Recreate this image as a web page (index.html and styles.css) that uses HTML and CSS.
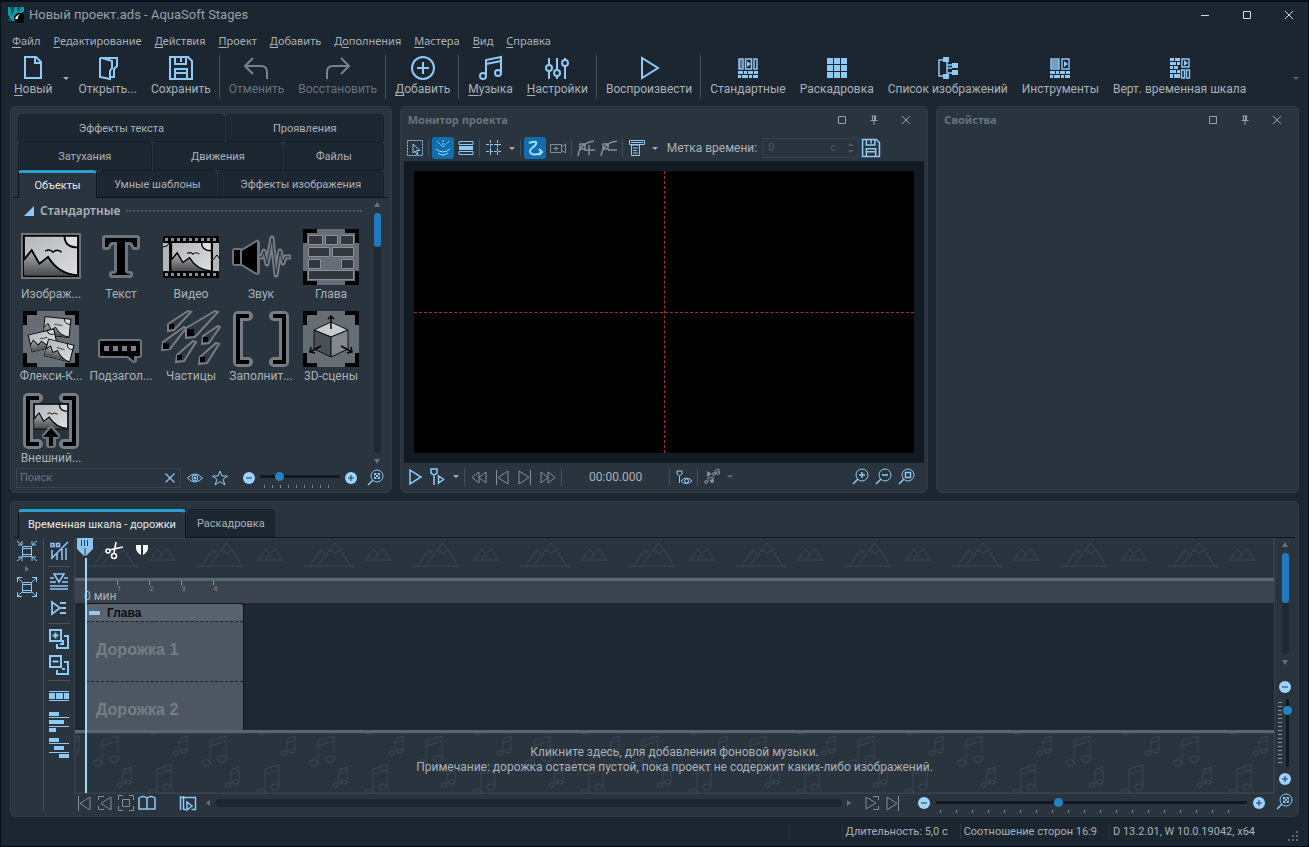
FILE: index.html
```
<!DOCTYPE html>
<html lang="ru">
<head>
  <meta charset="UTF-8">
  <meta name="viewport" content="width=device-width, initial-scale=1.0">
  <title>Новый проект.ads - AquaSoft Stages</title>
  <link rel="stylesheet" href="styles.css">
</head>
<body>
  <svg class="sprite" aria-hidden="true">
    <defs>
      <linearGradient id="sky" x1="0" y1="0" x2="1" y2="1"><stop offset="0" stop-color="#b4b6b9"/><stop offset="1" stop-color="#dcdee0"/></linearGradient>
      <linearGradient id="hill" x1="0" y1="0" x2="0" y2="1"><stop offset="0" stop-color="#b0b2b4"/><stop offset="1" stop-color="#4a4c4f"/></linearGradient>
    </defs>
    <!-- main toolbar, 26x26 -->
    <symbol id="i-new" viewBox="0 0 26 26"><path d="M5 2h11l5 5v16H5zM15 2v6h6"/></symbol>
    <symbol id="i-open" viewBox="0 0 26 26"><path d="M5 3h17v8l-3 3v8h-4M5 3v19l10 2v-8l2-3V6L7 3"/></symbol>
    <symbol id="i-save" viewBox="0 0 26 26"><path d="M2 2h18l4 4v18H2zM7 2v7h11V2M13 3v4M7 24V14h12v10M7 18h12"/></symbol>
    <symbol id="i-undo" viewBox="0 0 26 26"><path d="M10 3L2 11l8 8M2 11h16q6 0 6 6v7"/></symbol>
    <symbol id="i-redo" viewBox="0 0 26 26"><path d="M16 3l8 8-8 8M24 11H8q-6 0-6 6v7"/></symbol>
    <symbol id="i-add" viewBox="0 0 26 26"><circle cx="13" cy="13" r="11"/><path d="M13 7v12M7 13h12"/></symbol>
    <symbol id="i-music" viewBox="0 0 26 26"><path d="M8 20V5l15-3v16M8 9l15-3"/><circle cx="5" cy="21" r="3"/><circle cx="20" cy="18" r="3"/></symbol>
    <symbol id="i-sliders" viewBox="0 0 26 26"><path d="M5 3v7M5 16v8M13 3v12M13 21v3M21 3v2M21 11v13"/><circle cx="5" cy="13" r="3"/><circle cx="13" cy="18" r="3"/><circle cx="21" cy="8" r="3"/></symbol>
    <symbol id="i-play" viewBox="0 0 26 26"><path d="M6 3v20l16-10z"/></symbol>
    <symbol id="i-lay1" viewBox="0 0 26 26"><path d="M4 4h4v10H4zM10.500 4h6v10h-6zM19 4h3v10h-3z" stroke-width="1.500"/><path d="M4 6h3M4 8h3M4 10h3M4 12h3" stroke-width="1"/><path class="fl" d="M12 6l4 3-4 3zM3 16h5v3H3zM9 16h3v3H9zM13 16h5v3h-5zM19 16h4v3h-4zM3 20h3v3H3zM7 20h6v3H7zM14 20h3v3h-3zM18 20h5v3h-5z"/></symbol>
    <symbol id="i-grid9" viewBox="0 0 26 26"><path class="fl" d="M3 3h6v6H3zM10 3h6v6h-6zM17 3h6v6h-6zM3 10h6v6H3zM10 10h6v6h-6zM17 10h6v6h-6zM3 17h6v6H3zM10 17h6v6h-6zM17 17h6v6h-6z"/></symbol>
    <symbol id="i-tree" viewBox="0 0 26 26"><path d="M8 5H4v16h4M12 6v7h5M12 13v5h5M12 10h6" stroke-width="1.500"/><path class="fl" d="M8 2h6v5H8zM17 8h6v5h-6zM17 15h6v5h-6zM8 19h6v5H8z"/></symbol>
    <symbol id="i-lay2" viewBox="0 0 26 26"><path d="M15 4h7v10h-7zM4 4h8v10H4zM4 6h8M4 8h8M4 10h8M4 12h8" stroke-width="1.400"/><path class="fl" d="M17 6l4 3-4 3zM3 16h5v3H3zM9 16h3v3H9zM13 16h5v3h-5zM19 16h4v3h-4zM3 20h3v3H3zM7 20h6v3H7zM14 20h3v3h-3zM18 20h5v3h-5z"/></symbol>
    <symbol id="i-lay3" viewBox="0 0 26 26"><path d="M15 4h7v8h-7zM14.500 15h3v8h-3zM19.500 15h3v8h-3z" stroke-width="1.400"/><path class="fl" d="M17 5l4 3-4 3zM3 3h4v3H3zM8 3h5v3H8zM3 7h6v3H3zM10 7h3v3h-3zM3 11h3v3H3zM7 11h4v3H7zM3 15h6v3H3zM10 15h3v3h-3zM3 19h3v4H3zM7 19h6v4H7z"/></symbol>

    <!-- window and panel controls -->
    <symbol id="i-min" viewBox="0 0 16 16"><path d="M4 8.500h8"/></symbol>
    <symbol id="i-max" viewBox="0 0 16 16"><path d="M4.500 4.500h7v7h-7z"/></symbol>
    <symbol id="i-close" viewBox="0 0 16 16"><path d="M4 4l8 8M12 4l-8 8"/></symbol>
    <symbol id="i-pin" viewBox="0 0 16 16"><path d="M5.500 4h5M6.500 4v4.500M4.500 8.500h7M8 9v4"/><path class="fl" d="M8 4h2v5H8z"/></symbol>

    <!-- monitor toolbar, 20x20 -->
    <symbol id="i-select" viewBox="0 0 20 20"><path d="M2.500 2.500h15v15h-15z" stroke-dasharray="2 1"/><path d="M8 6v9l2-2 2 4 1-1-1.500-3.500H15z"/></symbol>
    <symbol id="i-snap" viewBox="0 0 20 20"><path d="M4 3l6 6 6-6M10 2v6" stroke-dasharray="2 1"/><path d="M3 11q7 6 14 0M5 15q5 4 10 0"/></symbol>
    <symbol id="i-rows" viewBox="0 0 20 20"><path d="M3 3.500h14v3H3z"/><path class="fl" d="M3 8h14v4H3z"/><path d="M3 13.500h14v3H3z"/></symbol>
    <symbol id="i-hash" viewBox="0 0 20 20"><path d="M6.500 2v16M13.500 2v16M2 6.500h16M2 13.500h16" stroke-dasharray="3 1"/></symbol>
    <symbol id="i-path" viewBox="0 0 20 20"><path d="M4 5q9-3 7 1c-2 4-6 4-6 7 0 4 7 5 12 1M14 11l3 3-3 3" stroke-width="2"/></symbol>
    <symbol id="i-cam" viewBox="0 0 20 20"><path d="M2.500 6.500h11v8h-11zM13.500 9l4-3v9l-4-3M8 8v5M5.500 10.500h5"/></symbol>
    <symbol id="i-cplus" viewBox="0 0 20 20"><path d="M2 18Q4 5 18 3M4 6h5v5H4zM13 7v10M8 12h11" stroke-width="1.500"/></symbol>
    <symbol id="i-cminus" viewBox="0 0 20 20"><path d="M2 18Q4 5 18 3M4 6h5v5H4zM9 12h9" stroke-width="1.500"/></symbol>
    <symbol id="i-text" viewBox="0 0 20 20"><path d="M2.500 2.500h15v4h-15zM4.500 7h8v10.500h-8zM6 10h5M6 12.500h4M6 15h5M4 4.500h12"/></symbol>

    <!-- playback -->
    <symbol id="p-play" viewBox="0 0 20 20"><path d="M5 3v14l11-7z" stroke-width="1.500"/></symbol>
    <symbol id="p-mark" viewBox="0 0 20 20"><path d="M3 2h6v4L6 8 3 6zM6 8v10M10.500 9v7l5-3.500z" stroke-width="1.500"/></symbol>
    <symbol id="p-rew" viewBox="0 0 20 20"><path d="M10 5v11l-7-5.500zM17 5v11l-7-5.500z"/></symbol>
    <symbol id="p-first" viewBox="0 0 20 20"><path d="M4.500 3v15M16 4v13l-10-6.500z"/></symbol>
    <symbol id="p-last" viewBox="0 0 20 20"><path d="M15.500 3v15M4 4v13l10-6.500z"/></symbol>
    <symbol id="p-ff" viewBox="0 0 20 20"><path d="M10 5v11l7-5.500zM3 5v11l7-5.500z"/></symbol>
    <symbol id="p-eye" viewBox="0 0 20 20"><path d="M3 4h5v3L5.500 9 3 7zM5.500 9v7M7 14q5-6 11 0-6 5-11 0z"/><circle cx="12.500" cy="14" r="2"/></symbol>
    <symbol id="p-note" viewBox="0 0 20 20"><path class="fl" d="M5 4l5 3-5 3z"/><circle cx="4" cy="15" r="1.500"/><circle class="fl" cx="10" cy="14" r="2"/><path d="M6 15v-4l5-1v4M13 7V3l4-1v4"/><circle cx="12" cy="7" r="1.500"/><circle cx="16" cy="6" r="1.500"/></symbol>
    <symbol id="z-in" viewBox="0 0 20 20"><circle cx="11" cy="8" r="6"/><path d="M7 12l-5 5M11 5v6M8 8h6" stroke-width="1.500"/></symbol>
    <symbol id="z-out" viewBox="0 0 20 20"><circle cx="11" cy="8" r="6"/><path d="M7 12l-5 5M8 8h6" stroke-width="1.500"/></symbol>
    <symbol id="z-fit" viewBox="0 0 20 20"><circle cx="11" cy="8" r="6"/><path d="M7 12l-5 5M8.500 5.500h5v5h-5z" stroke-width="1.500"/></symbol>
    <symbol id="z-all" viewBox="0 0 20 20"><circle cx="11" cy="8" r="6"/><path d="M7 12l-5 5" stroke-width="1.500"/><path d="M8.500 5.500l5 5M13.500 5.500l-5 5M8.500 7.500v-2h2M11.500 5.500h2v2M13.500 8.500v2h-2M10.500 10.500h-2v-2"/></symbol>
    <symbol id="i-eye" viewBox="0 0 20 20"><path d="M2.500 10q7.500-8 15 0-7.500 8-15 0z"/><circle cx="10" cy="10" r="3"/><circle class="fl" cx="10" cy="10" r="1.500"/></symbol>
    <symbol id="i-star" viewBox="0 0 20 20"><path d="M10 3l2 5h5.500l-4.500 3.500 2 5.500-5-3.500L5 17l2-5.500L2.500 8H8z"/></symbol>
    <symbol id="i-minus" viewBox="0 0 14 14"><circle cx="7" cy="7" r="6" fill="#9fd3fb" stroke="none"/><path d="M4 7h6" stroke="#1b3a55"/></symbol>
    <symbol id="i-plus" viewBox="0 0 14 14"><circle cx="7" cy="7" r="6" fill="#9fd3fb" stroke="none"/><path d="M4 7h6M7 4v6" stroke="#1b3a55"/></symbol>

    <!-- timeline tools, 22x22 -->
    <symbol id="t-in" viewBox="0 0 22 22"><path d="M6.500 6.500h9v10h-9zM6.500 8.500h9M6.500 14.500h9M1 1l5 4M21 1l-5 4M1 21l5-4M21 21l-5-4M2 5h4V1M20 5h-4V1M2 17h4v4M20 17h-4v4"/></symbol>
    <symbol id="t-out" viewBox="0 0 22 22"><path d="M6.500 6.500h9v10h-9zM6.500 8.500h9M6.500 14.500h9M1 1l5 5M21 1l-5 5M1 21l5-5M21 21l-5-5M1.500 6V1.500H6M20.500 6V1.500H16M1.500 16v4.500H6M20.500 16v4.500H16"/></symbol>
    <symbol id="t-mode" viewBox="0 0 22 22"><path d="M3 3.500h3v3H3zM8.500 3.500h3v3h-3zM20 2L3 19M4 10v8M9 14v6M14 9v11M18 8v12" stroke-width="1.500"/></symbol>
    <symbol id="t-down" viewBox="0 0 22 22"><path d="M6 3h10l-5 8zM2 7h4M16 7h4M2 11h6M14 11h6M2 15h18M2 18h18" stroke-width="1.500"/></symbol>
    <symbol id="t-right" viewBox="0 0 22 22"><path d="M4 5v12l8-6zM12 6h6M13 11h5M12 16h6" stroke-width="1.800"/></symbol>
    <symbol id="t-add" viewBox="0 0 22 22"><path d="M2 2h11v11H2zM7.500 4.500v6M4.500 7.500h6M16 8h4v12H9v-4M15 12v4h-3" stroke-width="2"/></symbol>
    <symbol id="t-del" viewBox="0 0 22 22"><path d="M2 2h11v11H2zM4.500 7.500h6M16 8h4v12H9v-4M14 15h3" stroke-width="2"/></symbol>
    <symbol id="t-film" viewBox="0 0 22 22"><path d="M1 6.500h20M1 15.500h20"/><path class="fl" d="M1 8h6v6H1zM8 8h7v6H8zM16 8h5v6h-5z"/></symbol>
    <symbol id="t-al1" viewBox="0 0 22 22"><path d="M1 6.500h20M1 15.500h20"/><path class="fl" d="M1 1h10v4H1zM1 9h15v4H1zM1 17h7v4H1z"/></symbol>
    <symbol id="t-al2" viewBox="0 0 22 22"><path d="M1 6.500h20M1 15.500h20"/><path class="fl" d="M1 1h10v4H1zM6 9h10v4H6zM11 17h10v4H11z"/></symbol>
    <symbol id="n-left" viewBox="0 0 20 20"><path d="M9 3.500H3.500V7M3.500 13v3.500H9M16 4v13l-10-6.500z"/></symbol>
    <symbol id="n-right" viewBox="0 0 20 20"><path d="M11 3.500h5.500V7M16.500 13v3.500H11M4 4v12l10-6z"/></symbol>
    <symbol id="n-frame" viewBox="0 0 20 20"><path d="M6.500 6.500h7v7h-7zM2.500 7V2.500H7M13 2.500h4.500V7M17.500 13v4.500H13M7 17.500H2.500V13"/></symbol>
    <symbol id="n-book" viewBox="0 0 20 20"><path d="M10 5q-4-3-8 0v11h16V5q-4-3-8 0v11" stroke-width="1.500"/></symbol>
    <symbol id="n-box" viewBox="0 0 20 20"><path d="M2.500 3v14M5.500 3v14M2.500 4.500h15v12h-4M5.500 16.500H8M9 9v8l5-4z" stroke-width="1.500"/></symbol>

    <!-- landscape picture shared by several object icons -->
    <symbol id="pic" viewBox="0 0 60 46" preserveAspectRatio="none"><path fill="url(#sky)" stroke="#000" stroke-width="2" d="M2 2h56v42H2z"/><path fill="url(#hill)" stroke="none" d="M2 27l8-10 8 14 9-7q11 18 29 19H2z"/><path fill="none" stroke="#000" stroke-width="2" d="M2 27l8-10 8 14 9-7q11 18 30 19"/><path fill="#dcdee0" stroke="#000" stroke-width="2" d="M44 2q0 12 14 12V2z"/><path fill="none" stroke="#000" stroke-width="1.500" d="M24 18q5-3 8 1 4-4 9 0"/></symbol>
  </svg>

  <header class="titlebar">
    <svg class="app-logo" viewBox="0 0 16 16"><path fill="#04090d" d="M0 0h16v16H0z"/><path fill="#1599a5" d="M0 0h16v5l-5 2-5 8-3-2-3-5z"/><path fill="#0b5863" d="M2 0l2 9 3-9zM9 0l1 7 3-7zM1 8l3 8-4-2z"/><circle cx="11" cy="11" r="5" fill="#020406"/><path fill="#fff" d="M7 12q1-4 6-5-4 2-3 5z"/></svg>
    <span class="title">Новый проект.ads - AquaSoft Stages</span>
    <button class="win" aria-label="Свернуть"><svg class="ic"><use href="#i-min"/></svg></button>
    <button class="win" aria-label="Развернуть"><svg class="ic"><use href="#i-max"/></svg></button>
    <button class="win" aria-label="Закрыть"><svg class="ic"><use href="#i-close"/></svg></button>
  </header>

  <nav class="menu">
    <button><u>Ф</u>айл</button>
    <button><u>Р</u>едактирование</button>
    <button><u>Д</u>ействия</button>
    <button><u>П</u>роект</button>
    <button><u>Д</u>обавить</button>
    <button>Д<u>о</u>полнения</button>
    <button><u>М</u>астера</button>
    <button><u>В</u>ид</button>
    <button><u>С</u>правка</button>
  </nav>

  <div class="toolbar">
    <button><svg class="ic"><use href="#i-new"/></svg><span><u>Н</u>овый</span></button>
    <button class="arrow" aria-label="Ещё"></button>
    <button><svg class="ic"><use href="#i-open"/></svg><span>Открыть...</span></button>
    <button><svg class="ic"><use href="#i-save"/></svg><span>Сохранить</span></button>
    <i class="sep"></i>
    <button disabled><svg class="ic"><use href="#i-undo"/></svg><span>Отменить</span></button>
    <button disabled><svg class="ic"><use href="#i-redo"/></svg><span>Восстановить</span></button>
    <i class="sep"></i>
    <button><svg class="ic"><use href="#i-add"/></svg><span><u>Д</u>обавить</span></button>
    <i class="sep"></i>
    <button><svg class="ic"><use href="#i-music"/></svg><span><u>М</u>узыка</span></button>
    <button><svg class="ic"><use href="#i-sliders"/></svg><span><u>Н</u>астройки</span></button>
    <i class="sep"></i>
    <button><svg class="ic"><use href="#i-play"/></svg><span>Воспроизвести</span></button>
    <i class="sep"></i>
    <button><svg class="ic"><use href="#i-lay1"/></svg><span>Стандартные</span></button>
    <button><svg class="ic"><use href="#i-grid9"/></svg><span>Раскадровка</span></button>
    <button><svg class="ic"><use href="#i-tree"/></svg><span>Список изображений</span></button>
    <button><svg class="ic"><use href="#i-lay2"/></svg><span>Инструменты</span></button>
    <button><svg class="ic"><use href="#i-lay3"/></svg><span>Верт. временная шкала</span></button>
    <button class="arrow last dim" aria-label="Параметры панели"></button>
  </div>

  <main class="workspace">
    <section class="panel toolbox">
      <div class="tabs">
        <div class="tab-row r1"><button>Эффекты текста</button><button>Проявления</button></div>
        <div class="tab-row r2"><button>Затухания</button><button>Движения</button><button>Файлы</button></div>
        <div class="tab-row r3"><button class="active">Объекты</button><button>Умные шаблоны</button><button>Эффекты изображения</button></div>
      </div>
      <div class="list">
        <div class="list-main">
          <h2 class="group">Стандартные</h2>
          <div class="objects">
            <button class="object"><svg viewBox="0 0 60 60"><path fill="#6e747c" d="M0 6h60v46H0z"/><use href="#pic" x="1" y="7" width="58" height="44"/></svg><span>Изображ...</span></button>
            <button class="object"><svg viewBox="0 0 60 60"><path class="halo" d="M14 11h32v9h-3q-1-5-5-5h-4v29q0 3 5 3v1H21v-1q5 0 5-3V15h-4q-4 0-5 5h-3z"/><path d="M14 11h32v9h-3q-1-5-5-5h-4v29q0 3 5 3v1H21v-1q5 0 5-3V15h-4q-4 0-5 5h-3z"/></svg><span>Текст</span></button>
            <button class="object"><svg viewBox="0 0 60 60"><path fill="#c5c7ca" d="M2 11h56v38H2z"/><use href="#pic" x="9" y="14" width="43" height="32"/><path fill="#b4b6b9" d="M2 15h7v30H2zM52 15h6v30h-6z"/><path d="M2 9h56v7H2zM2 44h56v7H2zM8 14h2v32H8zM50 14h2v32h-2z"/><path stroke="#8b9199" stroke-width="3" stroke-dasharray="3 3" d="M4 12.500h54M4 47.500h54"/><path fill="none" stroke="#000" d="M2 20q5 0 6-4M52 33l4-5 3 4"/></svg><span>Видео</span></button>
            <button class="object"><svg viewBox="0 0 60 60"><path class="halo" d="M4 24h5v12H4zM11 25l15-9v29l-15-9z"/><path class="wave-halo" d="M28 30h3l2-6 3 13 5-26 4 37 4-24 3 12 2-6h5"/><path d="M3 23h6v14H3zM11 24l15-9v31l-15-9z"/><path class="wave" d="M28 30h3l2-6 3 13 5-26 4 37 4-24 3 12 2-6h5"/></svg><span>Звук</span></button>
            <button class="object"><svg viewBox="0 0 60 60"><path class="plate" d="M2 2h56v56H2z"/><path class="corner" d="M4 16V4h12M44 4h12v12M56 44v12H44M16 56H4V44"/><path class="brick" d="M7.500 8.500h14v9h-14zM24.500 8.500h12v9h-12zM39.500 8.500h13v9h-13zM7.500 20.500h21v9h-21zM31.500 20.500h21v9h-21zM7.500 32.500h12v9h-12zM40.500 32.500h12v9h-12zM7.500 43.500h45v9h-45z"/></svg><span>Глава</span></button>
            <button class="object"><svg viewBox="0 0 60 60"><path class="plate" d="M2 2h56v56H2z"/><path class="corner" d="M4 16V4h12M44 4h12v12M56 44v12H44M16 56H4V44"/><g transform="rotate(6 36 18)"><use href="#pic" x="22" y="8" width="28" height="20"/></g><g transform="rotate(-13 22 32)"><use href="#pic" x="8" y="22" width="28" height="19"/></g><g transform="rotate(14 38 42)"><use href="#pic" x="24" y="32" width="28" height="19"/></g></svg><span>Флекси-К...</span></button>
            <button class="object"><svg viewBox="0 0 60 60"><path class="halo" d="M10 33h38v13h-5v5l-6-5H10z"/><path d="M9 32h40v15h-6v5l-6-5H9z"/><path fill="#7b8088" d="M13 37h5v5h-5zM22 37h5v5h-5zM31 37h5v5h-5zM40 37h5v5h-5z"/></svg><span>Подзагол...</span></button>
            <button class="object"><svg viewBox="0 0 60 60"><path class="comet" d="M7 15L27 2l3 1-17 18-6 1zM25 19L54 2l3 1-23 25-9 1zM42 27l15-10 2 1-11 16-7 1zM2 33l21-15 2 1-16 21-8 1zM16 46l16-14 3 1-12 19-8 1zM39 48l16-14 3 1-12 19-8 1z"/><path d="M8 15h5v5H8zM26 20h7v7h-7zM42 28h5v5h-5zM2 34h6v6H2zM16 46h5v5h-5zM39 48h5v5h-5z"/></svg><span>Частицы</span></button>
            <button class="object"><svg viewBox="0 0 60 60"><path class="br-halo" d="M17 7H7v46h10M43 7h10v46H43"/><path class="br" d="M18 7H7v46h11M42 7h11v46H42"/></svg><span>Заполнит...</span></button>
            <button class="object"><svg viewBox="0 0 60 60"><path class="plate" d="M2 2h56v56H2z"/><path class="corner" d="M4 16V4h12M44 4h12v12M56 44v12H44M16 56H4V44"/><path fill="#c9cccf" stroke="#111" d="M13 21l17-8 17 8-17 7z"/><path fill="#4b5057" stroke="#111" d="M13 21l17 7v20l-17-8z"/><path fill="#83888f" stroke="#111" d="M47 21l-17 7v20l17-8z"/><path fill="none" stroke="#000" stroke-width="1.500" d="M30 20V7M27 10l3-3 3 3M20 37L9 43M10 38l-1 5 5 1M40 37l11 6M50 38l1 5-5 1"/></svg><span>3D-сцены</span></button>
            <button class="object"><svg viewBox="0 0 60 60"><path class="br-halo" d="M17 7H7v46h10M43 7h10v46H43"/><path class="br" d="M18 7H7v46h11M42 7h11v46H42"/><use href="#pic" x="12" y="12" width="36" height="27"/><path class="halo" d="M28 54V45h-4l6-7 6 7h-4v9z"/><path d="M28 55V46h-6l8-9 8 9h-6v9z"/></svg><span>Внешний...</span></button>
          </div>
        </div>
        <div class="scroll"><i class="tri up"></i><div class="scroll-track"><i class="thumb list-thumb"></i></div><i class="tri down"></i></div>
      </div>
      <div class="finder">
        <div class="search">
          <input type="text" placeholder="Поиск" aria-label="Поиск">
          <button class="tool" aria-label="Очистить"><svg class="ic"><use href="#i-close"/></svg></button>
        </div>
        <button class="tool" aria-label="Показать"><svg class="ic"><use href="#i-eye"/></svg></button>
        <button class="tool" aria-label="Избранное"><svg class="ic"><use href="#i-star"/></svg></button>
        <button class="tool round less" aria-label="Уменьшить"><svg class="ic"><use href="#i-minus"/></svg></button>
        <div class="slide"><input type="range" min="0" max="100" value="22" aria-label="Размер значков"><i class="ticks ticks-sm"></i></div>
        <button class="tool round more" aria-label="Увеличить"><svg class="ic"><use href="#i-plus"/></svg></button>
        <button class="tool" aria-label="Сбросить масштаб"><svg class="ic"><use href="#z-all"/></svg></button>
      </div>
    </section>

    <section class="panel monitor">
      <div class="panel-head">
        <h2>Монитор проекта</h2>
        <button aria-label="Развернуть"><svg class="ic"><use href="#i-max"/></svg></button>
        <button aria-label="Закрепить"><svg class="ic"><use href="#i-pin"/></svg></button>
        <button aria-label="Закрыть"><svg class="ic"><use href="#i-close"/></svg></button>
      </div>
      <div class="bar">
        <button class="tool" aria-label="Выделение"><svg class="ic"><use href="#i-select"/></svg></button>
        <i class="sep"></i>
        <button class="tool on" aria-label="Привязка"><svg class="ic"><use href="#i-snap"/></svg></button>
        <button class="tool" aria-label="Слои"><svg class="ic"><use href="#i-rows"/></svg></button>
        <i class="sep"></i>
        <button class="tool" aria-label="Сетка"><svg class="ic"><use href="#i-hash"/></svg></button>
        <button class="arrow" aria-label="Параметры сетки"></button>
        <i class="sep"></i>
        <button class="tool on" aria-label="Путь"><svg class="ic"><use href="#i-path"/></svg></button>
        <button class="tool gray" aria-label="Камера"><svg class="ic"><use href="#i-cam"/></svg></button>
        <i class="sep"></i>
        <button class="tool gray" aria-label="Добавить точку"><svg class="ic"><use href="#i-cplus"/></svg></button>
        <button class="tool gray" aria-label="Удалить точку"><svg class="ic"><use href="#i-cminus"/></svg></button>
        <i class="sep"></i>
        <button class="tool" aria-label="Текст"><svg class="ic"><use href="#i-text"/></svg></button>
        <button class="arrow" aria-label="Параметры текста"></button>
        <label class="stamp" for="stamp">Метка времени:</label>
        <div class="spin"><input id="stamp" type="text" value="0" disabled><span>с</span><div class="spin-arrows"><i class="tri up"></i><i class="tri down"></i></div></div>
        <button class="tool save" aria-label="Сохранить"><svg class="ic"><use href="#i-save"/></svg></button>
      </div>
      <div class="stage"><div class="screen"></div></div>
      <div class="bar play">
        <button class="tool" aria-label="Воспроизвести"><svg class="ic"><use href="#p-play"/></svg></button>
        <button class="tool" aria-label="От метки"><svg class="ic"><use href="#p-mark"/></svg></button>
        <button class="arrow" aria-label="Параметры воспроизведения"></button>
        <i class="sep"></i>
        <button class="tool gray" aria-label="Назад"><svg class="ic"><use href="#p-rew"/></svg></button>
        <button class="tool gray" aria-label="В начало"><svg class="ic"><use href="#p-first"/></svg></button>
        <button class="tool gray" aria-label="В конец"><svg class="ic"><use href="#p-last"/></svg></button>
        <button class="tool gray" aria-label="Вперёд"><svg class="ic"><use href="#p-ff"/></svg></button>
        <i class="sep"></i>
        <span class="timecode">00:00.000</span>
        <i class="sep"></i>
        <button class="tool" aria-label="Следить"><svg class="ic"><use href="#p-eye"/></svg></button>
        <i class="sep"></i>
        <button class="tool gray" aria-label="Звук"><svg class="ic"><use href="#p-note"/></svg></button>
        <button class="arrow dim" aria-label="Параметры звука"></button>
        <i class="grow"></i>
        <button class="tool" aria-label="Приблизить"><svg class="ic"><use href="#z-in"/></svg></button>
        <button class="tool" aria-label="Отдалить"><svg class="ic"><use href="#z-out"/></svg></button>
        <button class="tool" aria-label="Вписать"><svg class="ic"><use href="#z-fit"/></svg></button>
      </div>
    </section>

    <section class="panel props">
      <div class="panel-head">
        <h2>Свойства</h2>
        <button aria-label="Развернуть"><svg class="ic"><use href="#i-max"/></svg></button>
        <button aria-label="Закрепить"><svg class="ic"><use href="#i-pin"/></svg></button>
        <button aria-label="Закрыть"><svg class="ic"><use href="#i-close"/></svg></button>
      </div>
    </section>
  </main>

  <section class="panel timeline">
    <div class="tl-tabs">
      <button class="active">Временная шкала - дорожки</button>
      <button>Раскадровка</button>
    </div>
    <div class="tl-body">
      <div class="tl-tools zoomers">
        <button aria-label="Сжать"><svg class="ic"><use href="#t-in"/></svg></button>
        <i class="tri right"></i>
        <button aria-label="Растянуть"><svg class="ic"><use href="#t-out"/></svg></button>
      </div>
      <div class="tl-tools">
        <button aria-label="Режим"><svg class="ic"><use href="#t-mode"/></svg></button>
        <i class="hsep"></i>
        <button aria-label="Сдвиг вниз"><svg class="ic"><use href="#t-down"/></svg></button>
        <button aria-label="Сдвиг вправо"><svg class="ic"><use href="#t-right"/></svg></button>
        <i class="hsep"></i>
        <button aria-label="Добавить дорожку"><svg class="ic"><use href="#t-add"/></svg></button>
        <button aria-label="Удалить дорожку"><svg class="ic"><use href="#t-del"/></svg></button>
        <i class="hsep"></i>
        <button aria-label="Плёнка"><svg class="ic"><use href="#t-film"/></svg></button>
        <button aria-label="Выровнять"><svg class="ic"><use href="#t-al1"/></svg></button>
        <button aria-label="Ступенями"><svg class="ic"><use href="#t-al2"/></svg></button>
      </div>
      <div class="tl-center">
        <div class="tracks">
          <div class="band hills">
            <svg class="deco"><defs><pattern id="hills" x="13" y="1" width="108" height="39" patternUnits="userSpaceOnUse"><path d="M0 27h49M6 26l11-15 4 5M14 26L31 4l15 22M24 13l3-2 4 3 5-3M59 21h28M63 20l7-10 5 8M69 20l10-10 6 8"/></pattern></defs><rect width="100%" height="100%" fill="url(#hills)"/></svg>
          </div>
          <div class="ruler"><span class="zero">0 мин</span><div class="marks"><span>1</span><span>2</span><span>3</span><span>4</span></div></div>
          <div class="lanes">
            <article class="clip">
              <h3><i class="collapse"></i>Глава</h3>
              <div class="lane">Дорожка 1</div>
              <div class="lane">Дорожка 2</div>
            </article>
          </div>
          <div class="band music">
            <svg class="deco"><defs><pattern id="notes" x="18" y="2" width="108" height="60" patternUnits="userSpaceOnUse"><path d="M9 28V6l16-5v22M9 11l16-5M86 18V4l8-3v14M86 8l8-3M30 49V35l8-3v14M30 39l8-3M64 58V34l14-4v22M64 39l14-4"/><ellipse cx="5" cy="28" rx="5" ry="3"/><ellipse cx="21" cy="24" rx="5" ry="3"/><ellipse cx="83" cy="18" rx="3" ry="2"/><ellipse cx="91" cy="16" rx="3" ry="2"/><ellipse cx="27" cy="50" rx="3" ry="2"/><ellipse cx="35" cy="47" rx="3" ry="2"/><ellipse cx="60" cy="57" rx="5" ry="2"/><ellipse cx="74" cy="52" rx="4" ry="3"/></pattern></defs><rect width="100%" height="100%" fill="url(#notes)"/></svg>
            <p>Кликните здесь, для добавления фоновой музыки.<br>Примечание: дорожка остается пустой, пока проект не содержит каких-либо изображений.</p>
          </div>
          <div class="playhead">
            <svg class="head" viewBox="0 0 16 20"><path fill="#8cc4f0" d="M0 0h16v11l-7 7H7l-7-7z"/><path stroke="#23415c" stroke-width="1" fill="none" d="M4.500 2v6M7.500 2v6M10.500 2v6M8 10v8"/></svg>
            <svg class="cut" viewBox="0 0 20 20"><path fill="none" stroke="#fff" stroke-width="1.500" d="M11 2L9 13M4 10l14-3"/><circle cx="3" cy="11" r="2" fill="none" stroke="#fff" stroke-width="1.500"/><circle cx="9" cy="16" r="2.500" fill="none" stroke="#fff" stroke-width="1.500"/></svg>
            <svg class="split" viewBox="0 0 14 12"><path fill="#fff" d="M1 1h5v10Q1 8 1 4zM8 1h5v3q0 4-5 7z"/></svg>
          </div>
        </div>
        <div class="tl-nav">
          <button class="tool gray" aria-label="К началу"><svg class="ic"><use href="#p-first"/></svg></button>
          <button class="tool gray" aria-label="К предыдущему"><svg class="ic"><use href="#n-left"/></svg></button>
          <button class="tool gray" aria-label="К объекту"><svg class="ic"><use href="#n-frame"/></svg></button>
          <button class="tool" aria-label="Книга"><svg class="ic"><use href="#n-book"/></svg></button>
          <button class="tool follow" aria-label="Следовать"><svg class="ic"><use href="#n-box"/></svg></button>
          <i class="tri left"></i><div class="hscroll"></div><i class="tri right"></i>
          <button class="tool gray" aria-label="К следующему"><svg class="ic"><use href="#n-right"/></svg></button>
          <button class="tool gray" aria-label="К концу"><svg class="ic"><use href="#p-last"/></svg></button>
          <button class="tool round out" aria-label="Отдалить"><svg class="ic"><use href="#i-minus"/></svg></button>
          <div class="slide wide"><input type="range" min="0" max="100" value="39" aria-label="Масштаб времени"><i class="ticks"></i></div>
          <button class="tool round" aria-label="Приблизить"><svg class="ic"><use href="#i-plus"/></svg></button>
        </div>
      </div>
      <div class="tl-side">
        <div class="scroll"><i class="tri up"></i><div class="scroll-track"><i class="thumb tl-thumb"></i></div><i class="tri down"></i></div>
        <button class="tool round" aria-label="Ниже"><svg class="ic"><use href="#i-minus"/></svg></button>
        <div class="vslide"><i class="vticks"></i><input type="range" min="0" max="100" value="12" aria-label="Высота дорожек"></div>
        <button class="tool round" aria-label="Выше"><svg class="ic"><use href="#i-plus"/></svg></button>
        <button class="tool" aria-label="Вписать всё"><svg class="ic"><use href="#z-all"/></svg></button>
      </div>
    </div>
  </section>

  <footer class="status">
    <span class="blank"></span>
    <span>Длительность: 5,0 с</span>
    <span>Соотношение сторон 16:9</span>
    <span>D 13.2.01, W 10.0.19042, x64</span>
    <svg class="grip" viewBox="0 0 12 12"><path fill="#5a6671" d="M9 1h2v2H9zM5 5h2v2H5zM9 5h2v2H9zM1 9h2v2H1zM5 9h2v2H5zM9 9h2v2H9z"/></svg>
  </footer>
</body>
</html>
```
FILE: styles.css
```
* {
  box-sizing: border-box;
}

body {
  margin: 0;
  height: 100vh;
  display: flex;
  flex-direction: column;
  overflow: hidden;
  background: #1c2631;
  border: 1px solid #050f1c;
  border-top-width: 2px;
  color: #a9b1b8;
  font-family: Roboto, "Noto Sans", sans-serif;
  font-size: 12px;
  line-height: 16px;
}

button,
input {
  font: inherit;
  color: inherit;
  background: none;
  border: 0;
  padding: 0;
  margin: 0;
}

h2,
h3,
p {
  margin: 0;
}

.sprite {
  position: absolute;
  width: 0;
  height: 0;
}

.ic {
  display: block;
  width: 20px;
  height: 20px;
  fill: none;
  stroke: currentColor;
}

.fl {
  fill: currentColor;
  stroke: none;
}

.grow {
  flex: 1;
}

/* title and menu */
.titlebar {
  display: flex;
  align-items: center;
  height: 28px;
  padding: 0 5px 2px 7px;
}

.app-logo {
  width: 16px;
  height: 16px;
  margin-right: 5px;
}

.title {
  flex: 1;
  color: #98a1aa;
  font-size: 13px;
}

.win {
  width: 28px;
  margin-left: 14px;
  padding: 0 6px;
  color: #d5dade;
}

.win .ic,
.panel-head .ic {
  width: 16px;
  height: 16px;
}

.menu {
  display: flex;
  gap: 1px;
  height: 22px;
  padding-left: 5px;
  font-family: "Noto Sans", sans-serif;
  font-size: 11px;
}

.menu button {
  padding: 0 6px;
}

.tabs,
.tl-tabs,
.status {
  font-size: 11px;
}

u {
  text-underline-offset: 2px;
}

.toolbar {
  display: flex;
  height: 54px;
  padding: 3px 6px 5px 6px;
}

.toolbar button {
  display: flex;
  flex-direction: column;
  align-items: center;
  padding: 0 7px;
  white-space: nowrap;
}

.toolbar .ic {
  width: 26px;
  height: 26px;
  stroke-width: 2;
  color: #8fc9f5;
}

.toolbar button:disabled {
  color: #66717c;
}

.toolbar button:disabled .ic {
  color: #77828c;
}

.sep {
  flex: none;
  width: 1px;
  margin: 0 2px 0 1px;
  background: #434e59;
}

.toolbar .sep {
  height: 44px;
}

.arrow {
  width: 12px;
  flex: none;
}

.arrow::before {
  content: "";
  display: block;
  width: 0;
  margin: 0 auto;
  border: 3px solid transparent;
  border-bottom: 0;
  border-top-color: #a3adb6;
}

.arrow.dim::before {
  border-top-color: #5b6671;
}

.toolbar .arrow {
  justify-content: center;
  padding: 0 3px;
}

.toolbar .arrow.last {
  margin-left: auto;
}

/* panels */
.workspace {
  display: grid;
  grid-template-columns: 382fr 529fr 363fr;
  grid-template-rows: minmax(0, 1fr);
  gap: 8px;
  flex: 388;
  min-height: 0;
  margin: 0 9px;
}

.panel {
  min-width: 0;
  min-height: 0;
  background: #2a343f;
  border: 1px solid #303b46;
  border-radius: 5px;
  display: flex;
  flex-direction: column;
}

.panel-head {
  display: flex;
  align-items: center;
  height: 28px;
  padding: 0 13px 2px 7px;
}

.panel-head h2 {
  flex: 1;
  font-family: "Noto Sans", sans-serif;
  font-size: 11px;
  color: #67727d;
}

.panel-head button {
  width: 16px;
  margin-left: 16px;
  color: #98a2ab;
}

.tool {
  flex: none;
  width: 22px;
  height: 22px;
  padding: 1px;
  border-radius: 3px;
  color: #8fc9f5;
}

.tool.gray {
  color: #848e97;
}

.tool.on {
  background: #0e6fae;
  color: #a8dcff;
}

.tool.save .ic {
  stroke-width: 2;
}

.tool.round {
  width: 14px;
  height: 14px;
  padding: 0;
}

.tool.round .ic {
  width: 14px;
  height: 14px;
}

.tri {
  flex: none;
  width: 0;
  height: 0;
  border: 3px solid transparent;
}

.tri.up {
  border-top: 0;
  border-bottom: 5px solid #66717c;
}

.tri.down {
  border-bottom: 0;
  border-top: 5px solid #66717c;
}

.tri.left {
  border-left: 0;
  border-right: 4px solid #66717c;
}

.tri.right {
  border-right: 0;
  border-left: 4px solid #66717c;
}

/* toolbox */
.tabs {
  padding: 7px 3px 0;
}

.tab-row {
  display: grid;
  gap: 1px;
  height: 28px;
  padding: 0 4px;
}

.r1 {
  grid-template-columns: 207fr 158fr;
}

.r2 {
  grid-template-columns: 134fr 131fr 100fr;
}

.r3 {
  grid-template-columns: 79fr 119fr 166fr;
  border-bottom: 1px solid #0b131b;
}

.tab-row button {
  padding-top: 2px;
  background: #1d2732;
  border: 1px solid #19222c;
  border-radius: 4px 4px 0 0;
  white-space: nowrap;
}

.tab-row .active,
.tl-tabs .active {
  background: #2a343f;
  border: 1px solid #0b131b;
  border-top: 3px solid #2a9fd2;
  border-bottom: 0;
  margin-bottom: -1px;
  padding-top: 0;
  color: #e3e8ec;
}

.list {
  flex: 1;
  min-height: 0;
  display: flex;
  padding: 4px 10px 0 5px;
}

.list-main {
  flex: 1;
  overflow: hidden;
}

.group {
  display: flex;
  align-items: center;
  gap: 6px;
  padding: 1px 12px 8px 8px;
  font-family: "Noto Sans", sans-serif;
  font-size: 12px;
  font-weight: 600;
}

.group::before {
  content: "";
  border: 5px solid #8fc9f5;
  border-top-color: transparent;
  border-left-color: transparent;
}

.group::after {
  content: "";
  flex: 1;
  border-top: 2px dotted #4a5560;
}

.objects {
  display: grid;
  grid-template-columns: repeat(5, 70px);
}

.object {
  height: 82px;
  display: flex;
  flex-direction: column;
  align-items: center;
  white-space: nowrap;
}

.object svg {
  width: 60px;
  height: 60px;
}

.object span {
  line-height: 14px;
}

.halo {
  fill: #6e747c;
  stroke: #6e747c;
  stroke-width: 6;
  stroke-linejoin: round;
}

.wave,
.wave-halo {
  fill: none;
  stroke: #292e36;
  stroke-width: 1;
}

.wave-halo {
  stroke: #777d84;
  stroke-width: 5;
  stroke-linejoin: round;
  stroke-linecap: round;
}

.plate {
  fill: #676d75;
}

.brick {
  fill: #32373d;
  stroke: #8c9298;
}

.corner {
  fill: none;
  stroke: #000;
  stroke-width: 4;
}

.comet {
  fill: #303740;
  stroke: #777d84;
  stroke-width: 2;
}

.br,
.br-halo {
  fill: none;
  stroke: #000;
  stroke-width: 4;
}

.br-halo {
  stroke: #777d84;
  stroke-width: 10;
  stroke-linejoin: round;
  stroke-linecap: round;
}

.scroll {
  display: flex;
  flex-direction: column;
  align-items: center;
  gap: 6px;
}

.scroll-track {
  flex: 1;
  width: 7px;
  background: #1f2934;
  border-radius: 3px;
}

.thumb {
  display: block;
  background: #2079bd;
  border-radius: 3px;
}

.list-thumb {
  height: 14%;
}

.tl-thumb {
  height: 49%;
}

.finder {
  display: flex;
  align-items: center;
  gap: 3px;
  height: 28px;
  padding: 0 4px 1px 5px;
}

.search {
  display: flex;
  flex: 1;
  min-width: 0;
  height: 20px;
  border: 1px solid #38434e;
}

.search input {
  flex: 1;
  min-width: 0;
  padding-left: 3px;
  font-size: 11px;
}

.search .tool {
  width: 20px;
  height: 18px;
  padding: 0;
}

.search .ic {
  height: 18px;
}

::placeholder {
  color: #69747f;
  opacity: 1;
}

.finder .less {
  margin: 0 1px 0 8px;
}

.finder .more {
  margin: 0 4px 0 1px;
}

/* sliders */
.slide {
  width: 80px;
  height: 22px;
  padding-top: 4px;
}

.slide input,
.vslide input {
  appearance: none;
  display: block;
  width: 100%;
  height: 12px;
}

input[type="range"]::-webkit-slider-runnable-track {
  height: 3px;
  background: #101923;
}

input[type="range"]::-webkit-slider-thumb {
  appearance: none;
  width: 9px;
  height: 9px;
  margin-top: -3px;
  border-radius: 50%;
  background: #2384c4;
}

.ticks {
  display: block;
  height: 3px;
  margin: 2px 4px 0;
  background: repeating-linear-gradient(90deg, #7f8a94 0 1px, transparent 1px 16px);
}

.ticks-sm {
  background: repeating-linear-gradient(90deg, #7f8a94 0 1px, transparent 1px 8px);
}

/* monitor */
.bar {
  display: flex;
  align-items: center;
  gap: 1px;
  height: 26px;
  padding: 0 9px 0 3px;
}

.bar .sep {
  height: 18px;
}

.stamp {
  margin: 0 5px;
}

.spin {
  display: flex;
  align-items: center;
  width: 96px;
  height: 20px;
  padding: 0 4px;
  border: 1px solid #35404b;
  color: #4d5863;
  font-size: 11px;
}

.spin input {
  flex: 1;
  min-width: 0;
}

.spin-arrows {
  display: grid;
  gap: 4px;
  margin-left: 12px;
}

.spin .tri.up {
  border-bottom: 3px solid #4d5863;
}

.spin .tri.down {
  border-top: 3px solid #4d5863;
}

.stage {
  flex: 1;
  min-height: 0;
  margin: 0 3px;
  padding: 10px;
  background: #121a23;
}

.screen {
  position: relative;
  height: 100%;
  background: #000;
}

/* dotted guides cross at the middle of the frame */
.screen::before,
.screen::after {
  content: "";
  position: absolute;
}

.screen::before {
  top: 0;
  bottom: 0;
  left: 50%;
  border-left: 1px dashed #b02a36;
}

.screen::after {
  left: 0;
  right: 0;
  top: 50%;
  border-top: 1px dashed #b02a36;
}

.play {
  height: 29px;
  padding-bottom: 2px;
}

.timecode {
  width: 102px;
  text-align: center;
}

/* timeline */
.timeline {
  flex: 307;
  margin: 8px 9px 0;
  padding: 7px 3px 0;
}

.tl-tabs {
  display: flex;
  gap: 1px;
  height: 29px;
  padding: 0 4px;
  border-bottom: 1px solid #0b131b;
}

.tl-tabs button {
  padding: 2px 9px 0;
  background: #1d2732;
  border: 1px solid #19222c;
  border-radius: 4px 4px 0 0;
}

.tl-body {
  flex: 1;
  min-height: 0;
  display: flex;
}

.tl-tools {
  display: flex;
  flex-direction: column;
  align-items: center;
  gap: 4px;
  width: 30px;
  padding-top: 2px;
  color: #8fc9f5;
}

.tl-tools .ic {
  width: 22px;
  height: 22px;
}

.zoomers {
  margin-bottom: 6px;
  padding-right: 3px;
  border-right: 1px solid #46515c;
}

.hsep {
  width: 22px;
  height: 1px;
  background: #46515c;
}

.tl-center {
  flex: 1;
  min-width: 0;
  display: flex;
  flex-direction: column;
}

.tracks {
  position: relative;
  flex: 1;
  min-height: 0;
  display: flex;
  flex-direction: column;
  border: 1px solid #36414c;
  border-width: 0 1px 1px;
  background: #1e2832;
}

.band {
  position: relative;
  background: #2a343f;
}

.hills {
  height: 40px;
}

.deco {
  position: absolute;
  inset: 0;
  width: 100%;
  height: 100%;
  fill: none;
  stroke: #3a444f;
}

.ruler {
  height: 25px;
  border-top: 3px solid #5c6670;
  background: #3a434e;
  display: flex;
  align-items: flex-end;
}

.zero {
  width: 33px;
  margin-left: 9px;
  white-space: nowrap;
  line-height: 14px;
}

.marks {
  display: flex;
  align-self: flex-start;
}

.marks span {
  width: 32px;
  padding-top: 3px;
  font-size: 8px;
  line-height: 10px;
  color: #7c8690;
  background: linear-gradient(#8b959e, #8b959e) 0 0 / 1px 4px no-repeat;
}

.lanes {
  flex: 1;
  min-height: 0;
  overflow: hidden;
}

.clip {
  width: 158px;
  margin-left: 11px;
  border: 1px solid #0d151d;
  border-width: 1px 1px 0 0;
  border-radius: 4px 4px 0 0;
  background: #4e5761;
  font-family: "Liberation Sans", Arial, sans-serif;
}

.clip h3 {
  display: flex;
  align-items: center;
  gap: 7px;
  height: 17px;
  padding-left: 3px;
  border-radius: 4px 4px 0 0;
  background: #5a636d;
  color: #0a0e12;
  font-size: 12px;
}

.collapse {
  width: 11px;
  height: 4px;
  background: #8fc9f5;
  border-radius: 1px;
}

.lane {
  height: 60px;
  padding-left: 10px;
  border-top: 1px dashed #1b232c;
  font-size: 16px;
  font-weight: bold;
  line-height: 55px;
  color: #757e87;
}

.music {
  height: 63px;
  padding-bottom: 6px;
  border-top: 3px solid #5c6670;
  display: grid;
  place-items: center;
}

.music p {
  position: relative;
  text-align: center;
  line-height: 15px;
}

.playhead {
  position: absolute;
  top: 20px;
  bottom: 0;
  left: 10px;
  width: 2px;
  background: #9fdcef;
}

.head,
.cut,
.split {
  position: absolute;
  top: -20px;
  left: -8px;
  width: 16px;
  height: 20px;
}

.cut {
  top: -18px;
  left: 20px;
  width: 20px;
}

.split {
  top: -14px;
  left: 50px;
  width: 14px;
  height: 12px;
}

.tl-nav {
  display: flex;
  align-items: center;
  height: 22px;
  padding: 0 9px 4px 0;
}

.tl-nav .tool:not(.round) {
  width: 21px;
  padding: 1px 0;
}

.tl-nav .follow {
  margin: 0 7px 0 20px;
}

.hscroll {
  flex: 628;
  height: 8px;
  margin: 0 5px;
  border-radius: 4px;
  background: #1e2731;
}

.tl-nav .tri.right {
  margin-right: 11px;
}

.tl-nav .out {
  margin-left: 13px;
}

.tl-nav .wide {
  flex: 312;
  margin: 0 5px;
}

.tl-side {
  width: 20px;
  display: flex;
  flex-direction: column;
  align-items: center;
  gap: 5px;
  padding: 4px 0 3px;
}

.tl-side .scroll {
  height: 123px;
  margin-bottom: 10px;
}

.vslide {
  display: flex;
  flex: 1;
  min-height: 0;
  gap: 1px;
}

.vslide input {
  writing-mode: vertical-lr;
  width: 9px;
  height: 100%;
}

.vslide input::-webkit-slider-runnable-track {
  width: 3px;
  height: 100%;
}

.vslide input::-webkit-slider-thumb {
  margin: 0 0 0 -3px;
}

.vticks {
  width: 4px;
  margin: 3px 0;
  background: repeating-linear-gradient(#8b959e 0 1px, transparent 1px 4px);
}

/* status bar */
.status {
  display: flex;
  align-items: center;
  justify-content: flex-end;
  height: 29px;
}

.status span {
  padding: 0 12px 0 3px;
  border-left: 1px solid #2a343f;
}

.status .blank {
  width: 53px;
  height: 16px;
}

.grip {
  width: 12px;
  height: 12px;
  margin: 8px 9px 0 20px;
}
```
